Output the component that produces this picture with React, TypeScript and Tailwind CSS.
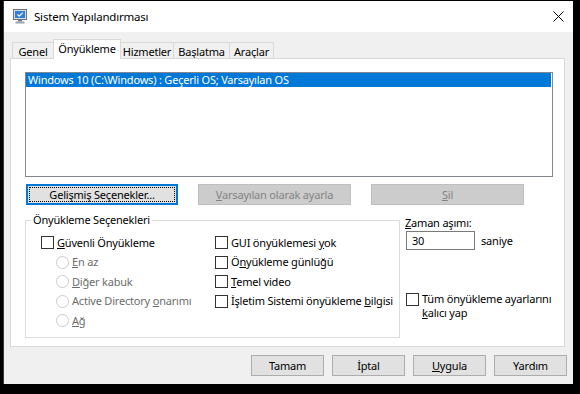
import React from "react";

function MonitorIcon() {
  return (
    <svg width="15" height="15" viewBox="0 0 15 15">
      <rect x="0.5" y="0.5" width="13" height="10" fill="#d8dce2" stroke="#6b7480" />
      <rect x="2" y="2" width="10" height="7" fill="#2f7fd6" />
      <path d="M4.5 5.5 L6.2 7.2 L9.8 3.6" stroke="#ffffff" strokeWidth="1.2" fill="none" />
      <rect x="5" y="11" width="4" height="1.5" fill="#6b7480" />
      <rect x="2.5" y="12.5" width="9" height="2" fill="#9aa3ad" />
    </svg>
  );
}

function CloseIcon() {
  return (
    <svg width="11" height="11" viewBox="0 0 11 11">
      <path d="M0.5 0.5 L10.5 10.5 M10.5 0.5 L0.5 10.5" stroke="#000" strokeWidth="1" />
    </svg>
  );
}

function CheckBox() {
  return <span className="w-[13px] h-[13px] shrink-0 border border-[#333333] bg-white" />;
}

function Radio() {
  return <span className="w-[13px] h-[13px] shrink-0 rounded-full border border-[#cccccc] bg-white" />;
}

function Check({ children }: { children: React.ReactNode }) {
  return (
    <div className="h-[19.5px] flex items-center gap-[3px] whitespace-nowrap">
      <CheckBox />
      <span className="leading-[14px]">{children}</span>
    </div>
  );
}

function RadioRow({ children }: { children: React.ReactNode }) {
  return (
    <div className="h-[19.5px] flex items-center gap-[3px] pl-[15px] text-[#6d6d6d] whitespace-nowrap">
      <Radio />
      <span className="leading-[14px]">{children}</span>
    </div>
  );
}

export default function App() {
  return (
    <div className="w-[580px] h-[394px] bg-black pl-[3px] pt-[1px] font-['Noto_Sans',sans-serif] text-[11px] tracking-[-0.2px] text-black overflow-hidden whitespace-nowrap">
      <div className="w-[570px] h-[383px] bg-[#f0f0f0] border-l border-[#3a3a3a] flex flex-col">
        {/* Title bar */}
        <div className="h-[31px] bg-white flex items-center pl-[9px] pr-[9px] shrink-0">
          <MonitorIcon />
          <span className="ml-[6px] leading-none text-[11.5px]">Sistem Yapılandırması</span>
          <span className="ml-auto flex items-center">
            <CloseIcon />
          </span>
        </div>

        {/* Tabs */}
        <div className="h-[26px] flex items-end pl-[8px] shrink-0">
          <div className="w-[41px] h-[16px] border-l border-t border-[#d9d9d9] flex items-center justify-center leading-none pt-[1px]">
            Genel
          </div>
          <div className="relative z-10 w-[68px] h-[20px] -mb-px bg-white border-l border-t border-r border-[#d9d9d9] flex items-start justify-center pt-[2px] leading-[14px]">
            Önyükleme
          </div>
          <div className="w-[52px] h-[16px] border-t border-[#d9d9d9] flex items-center justify-center leading-none pt-[1px]">
            Hizmetler
          </div>
          <div className="w-[56px] h-[16px] border-l border-t border-[#d9d9d9] flex items-center justify-center leading-none pt-[1px]">
            Başlatma
          </div>
          <div className="w-[45px] h-[16px] border-l border-t border-r border-[#d9d9d9] flex items-center justify-center leading-none pt-[1px]">
            Araçlar
          </div>
        </div>

        {/* Tab page */}
        <div className="ml-[6px] w-[555px] h-[289px] bg-white border border-[#d9d9d9] shrink-0 pl-[14px] pt-[13px]">
          {/* Boot list */}
          <div className="w-[528px] h-[105px] border border-[#828790]">
            <div className="h-[14px] mr-[1px] bg-[#0078d7] text-white leading-[14px] pl-[2px]">
              Windows 10 (C:\Windows) : Geçerli OS; Varsayılan OS
            </div>
          </div>

          {/* List buttons */}
          <div className="flex gap-[20px] mt-[7px] ml-[1px]">
            <div className="w-[152px] h-[21px] border-2 border-[#0078d7] bg-[#e1e1e1] p-px">
              <div className="h-full border border-dotted border-black flex items-center justify-center leading-none">
                Gelişmiş Seçenekler...
              </div>
            </div>
            <div className="w-[153px] h-[21px] border border-[#bfbfbf] bg-[#cccccc] text-[#838383] flex items-center justify-center leading-none">
              <span>
                <u>V</u>arsayılan olarak ayarla
              </span>
            </div>
            <div className="w-[153px] h-[21px] border border-[#bfbfbf] bg-[#cccccc] text-[#838383] flex items-center justify-center leading-none">
              <span>
                <u>S</u>il
              </span>
            </div>
          </div>

          {/* Lower area */}
          <div className="flex mt-[8px]">
            <fieldset className="w-[375px] min-w-0 h-[125px] border border-[#dcdcdc] px-[15px] overflow-hidden">
              <legend className="ml-[-10px] px-[2px] leading-[14px]">Önyükleme Seçenekleri</legend>
              <div className="flex pt-[6px]">
                <div className="w-[174px] shrink-0">
                  <Check>
                    <u>G</u>üvenli Önyükleme
                  </Check>
                  <RadioRow>
                    <u>E</u>n az
                  </RadioRow>
                  <RadioRow>
                    <u>D</u>iğer kabuk
                  </RadioRow>
                  <RadioRow>
                    Active Directory <u>o</u>narımı
                  </RadioRow>
                  <RadioRow>
                    <u>A</u>ğ
                  </RadioRow>
                </div>
                <div>
                  <Check>
                    GUI önyüklemesi <u>y</u>ok
                  </Check>
                  <Check>
                    Ö<u>n</u>yükleme günlüğü
                  </Check>
                  <Check>
                    <u>T</u>emel video
                  </Check>
                  <Check>
                    İşletim Sistemi önyükleme <u>b</u>ilgisi
                  </Check>
                </div>
              </div>
            </fieldset>

            <div className="ml-[5px] pt-[3px] flex flex-col">
              <div className="leading-[14px]">
                <u>Z</u>aman aşımı:
              </div>
              <div className="flex items-center mt-[1px] ml-[1px]">
                <div className="w-[69px] h-[19px] border border-[#7a7a7a] bg-white flex items-center pl-[5px] leading-none">
                  30
                </div>
                <span className="ml-[6px] leading-none">saniye</span>
              </div>
              <div className="flex items-start gap-[3px] mt-[42px] ml-[1px]">
                <span className="mt-[1px] flex">
                  <CheckBox />
                </span>
                <div className="flex flex-col leading-[14px]">
                  <span>Tüm önyükleme ayarlarını</span>
                  <span>
                    <u>k</u>alıcı yap
                  </span>
                </div>
              </div>
            </div>
          </div>
        </div>

        {/* Dialog buttons */}
        <div className="flex justify-end gap-[8px] pr-[6px] mt-[8px]">
          <div className="w-[73px] h-[21px] border border-[#adadad] bg-[#e1e1e1] flex items-center justify-center leading-none">
            Tamam
          </div>
          <div className="w-[73px] h-[21px] border border-[#adadad] bg-[#e1e1e1] flex items-center justify-center leading-none">
            İptal
          </div>
          <div className="w-[73px] h-[21px] border border-[#adadad] bg-[#e1e1e1] flex items-center justify-center leading-none">
            <span>
              <u>U</u>ygula
            </span>
          </div>
          <div className="w-[73px] h-[21px] border border-[#adadad] bg-[#e1e1e1] flex items-center justify-center leading-none">
            Yardım
          </div>
        </div>
      </div>
    </div>
  );
}
